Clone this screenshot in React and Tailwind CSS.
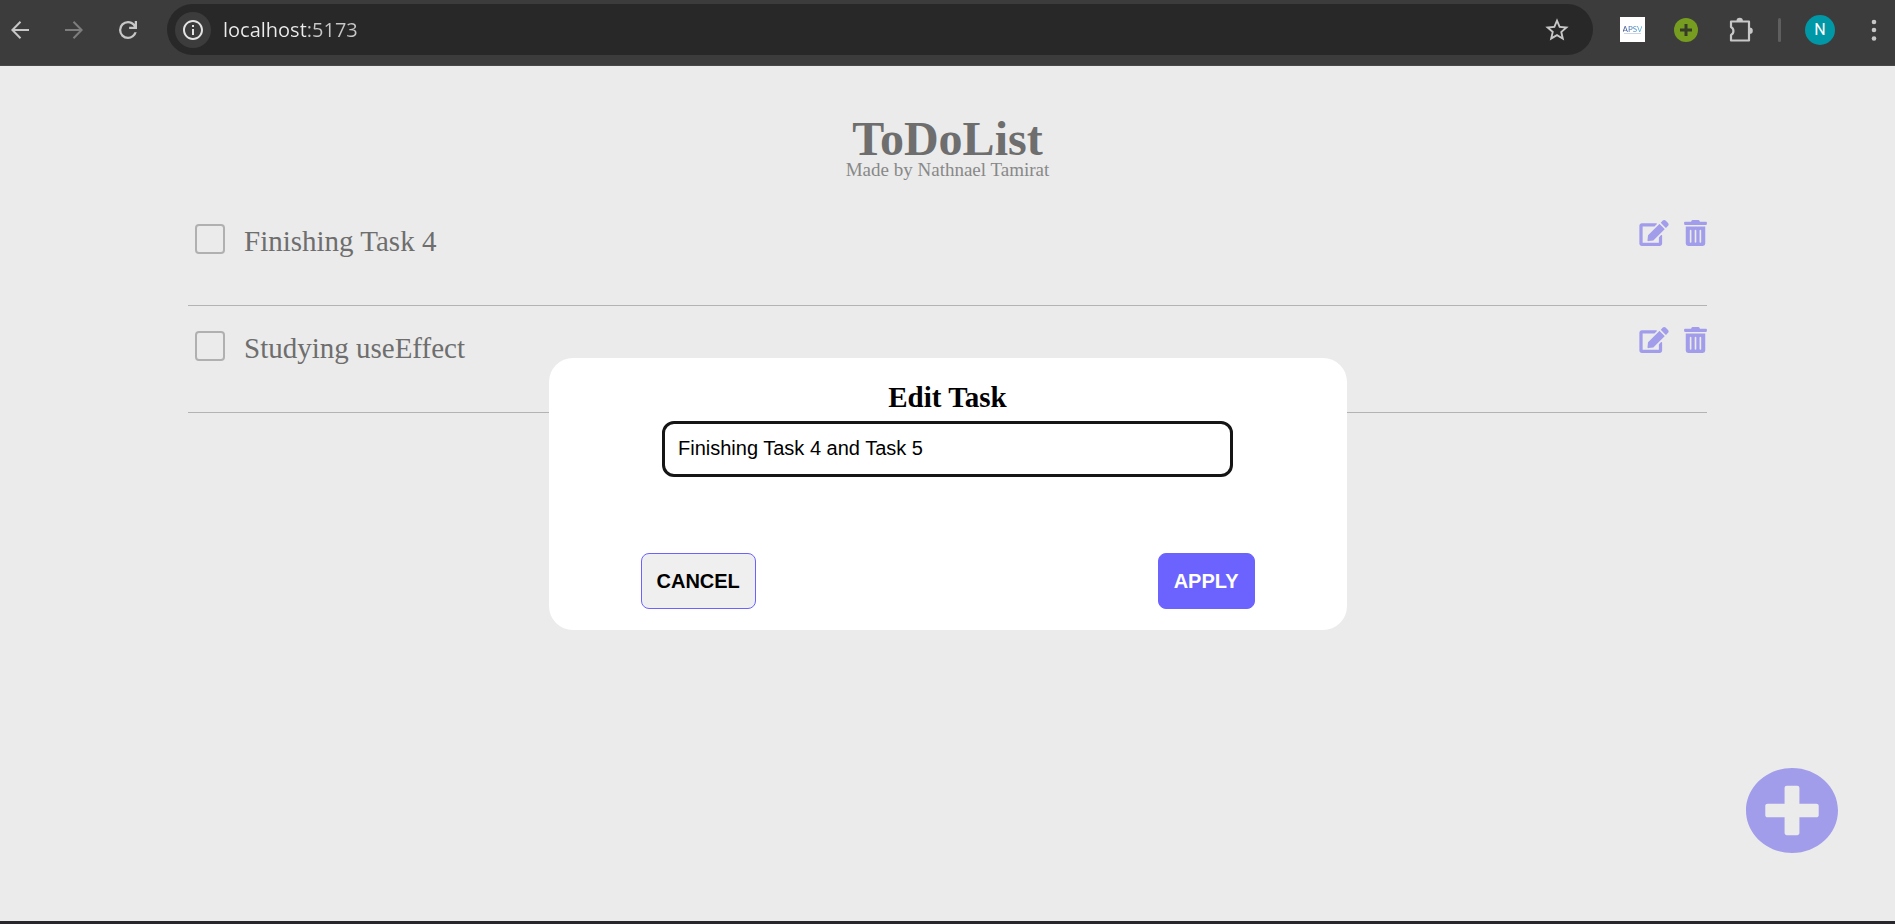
import { FaEdit, FaTrashAlt } from "react-icons/fa";
import { MdInfoOutline, MdStarBorder } from "react-icons/md";

const tasks = ["Finishing Task 4", "Studying useEffect"];

function BackArrow({ className }) {
  return (
    <svg viewBox="0 0 18 18" className={className} fill="none" stroke="currentColor" strokeWidth="2" aria-hidden="true">
      <path d="M18 9H1.5M9.5 0.8 1.4 9l8.1 8.2" />
    </svg>
  );
}

function Reload() {
  return (
    <svg viewBox="4 4 16 16" className="size-[18px]" fill="currentColor" aria-hidden="true">
      <path d="M12 20q-3.35 0-5.675-2.325T4 12t2.325-5.675T12 4q1.725 0 3.3.713T18 6.75V4h2v7h-7V9h4.2q-.8-1.4-2.187-2.2T12 6Q9.5 6 7.75 7.75T6 12t1.750 4.250T12 18q1.925 0 3.475-1.100T17.650 14h2.100q-.700 2.650-2.850 4.325T12 20" />
    </svg>
  );
}

function Puzzle() {
  return (
    <svg viewBox="0 0 26 26" className="size-[26px]" aria-hidden="true">
      <path d="M3 4.500h18v19H3v-5.500a4.500 4.500 0 0 0 0-8z" fill="none" stroke="currentColor" strokeWidth="2.200" strokeLinejoin="round" />
      <path d="M8.500 4a3.200 3.200 0 0 1 6.400 0zM21.500 10.500a3.300 3.300 0 0 1 0 6.600z" fill="currentColor" />
    </svg>
  );
}

function Toolbar() {
  return (
    <header className="flex h-[66px] items-start border-b border-[#484848] bg-[#3c3c3c] pt-1 text-[#c7c7c7]">
      <div className="flex h-[51px] w-[167px] shrink-0 items-center gap-9 pl-[11px]">
        <button type="button" aria-label="Back"><BackArrow className="size-[18px]" /></button>
        <button type="button" aria-label="Forward" className="text-[#7d7d7d]"><BackArrow className="size-[18px] rotate-180" /></button>
        <button type="button" aria-label="Reload"><Reload /></button>
      </div>
      <div className="flex h-[51px] flex-1 items-center rounded-full bg-[#282828] px-2">
        <button type="button" aria-label="Site information" className="flex size-9 items-center justify-center rounded-full bg-[#3c3c3c] text-[#e3e3e3]">
          <MdInfoOutline className="size-6" />
        </button>
        <input
          aria-label="Address"
          defaultValue="localhost:5173"
          className="ml-3 flex-1 bg-linear-to-r from-[#ececec] from-[83px] to-[#c7c7c7] to-[83px] bg-clip-text font-['Open_Sans',sans-serif] text-xl text-transparent outline-none"
        />
        <button type="button" aria-label="Bookmark" className="mr-[14px]"><MdStarBorder className="size-7" /></button>
      </div>
      <div className="flex h-[51px] shrink-0 items-center pr-[18px] pl-[27px]">
        <button type="button" className="flex size-[25px] flex-col items-center justify-center bg-white font-['Lato',sans-serif] text-[8px] leading-[8px] text-[#3f6fb5]">
          <span className="bg-linear-to-r from-[#3b4a8c] to-[#4fb3e0] bg-clip-text text-transparent">APSV</span>
          <span className="h-px w-[17px] bg-[#c9d6ea]" />
        </button>
        <button type="button" aria-label="Add" className="ml-[29px] flex size-6 items-center justify-center rounded-full bg-[#769c20] text-[#363c28]">
          <svg viewBox="0 0 12 12" className="size-3" aria-hidden="true"><path d="M6 0v12M0 6h12" stroke="currentColor" strokeWidth="3" /></svg>
        </button>
        <button type="button" aria-label="Extensions" className="ml-[30px]"><Puzzle /></button>
        <span className="ml-6 h-6 w-[3px] rounded-full bg-[#5f5f5f]" />
        <button type="button" className="ml-6 flex size-[30px] items-center justify-center rounded-full bg-[#0097a7] font-['Roboto',sans-serif] text-base text-white">N</button>
        <button type="button" aria-label="Menu" className="ml-9">
          <svg viewBox="0 0 6 22" className="h-[22px] w-[6px]" fill="currentColor" aria-hidden="true"><circle cx="3" cy="3" r="2.300" /><circle cx="3" cy="11" r="2.300" /><circle cx="3" cy="19.500" r="2.300" /></svg>
        </button>
      </div>
    </header>
  );
}

function Task({ name, index }) {
  const id = `task-${index}`;
  return (
    <li className="flex h-[107px] items-start border-b border-[#b3b3b3] pl-[7px]">
      <input id={id} type="checkbox" className="mt-[25px] size-[30px] appearance-none rounded-[4px] border-2 border-[#b0b0b0]" />
      <label htmlFor={id} className="mt-[26px] ml-[19px] flex-1 text-[29px] leading-8 text-[#6e6e6e]">{name}</label>
      <div className="mt-[21px] flex gap-[15px] text-[#a29deb]">
        <button type="button" aria-label={`Edit ${name}`}><FaEdit className="h-[26px] w-[30px]" /></button>
        <button type="button" aria-label={`Delete ${name}`}><FaTrashAlt className="h-[26px] w-[23px]" /></button>
      </div>
    </li>
  );
}

function EditDialog() {
  return (
    <div className="absolute inset-0 flex items-center justify-center">
      <form role="dialog" aria-labelledby="edit-title" className="flex w-[798px] max-w-full flex-col items-center rounded-3xl bg-white px-[92px] pt-[23px] pb-[21px]">
        <label id="edit-title" htmlFor="edit-task" className="text-[29px] leading-8 font-bold text-black">Edit Task</label>
        <input
          id="edit-task"
          defaultValue="Finishing Task 4 and Task 5"
          className="mt-2 h-14 w-[571px] max-w-full rounded-xl border-3 border-[#151515] px-[13px] font-['Liberation_Sans',sans-serif] text-xl text-black outline-none"
        />
        <div className="mt-19 flex w-full justify-between font-['Liberation_Sans',sans-serif] text-xl font-bold">
          <button type="button" className="h-14 rounded-lg border border-[#6c63ff] bg-[#efefef] px-[15px] text-black">CANCEL</button>
          <button type="submit" className="h-14 rounded-lg border border-[#6c63ff] bg-[#6c63ff] px-[15px] text-white">APPLY</button>
        </div>
      </form>
    </div>
  );
}

export default function App() {
  return (
    <div className="flex min-h-screen flex-col bg-[#ebebeb] font-['Liberation_Serif',serif]">
      <Toolbar />
      <main className="relative flex-1 border-b-3 border-[#28282c] px-47 pt-13">
        <div className="text-center">
          <h1 className="text-5xl leading-[42px] font-bold text-[#6e6e6e]">ToDoList</h1>
          <p className="text-[19px] leading-5 text-[#888888]">Made by Nathnael Tamirat</p>
        </div>
        <ul className="mt-[19px]">
          {tasks.map((name, i) => <Task key={name} name={name} index={i} />)}
        </ul>
        <button type="button" aria-label="Add task" className="absolute right-[57px] bottom-[68px] text-[#a29deb]">
          <svg viewBox="8 8 496 496" preserveAspectRatio="none" className="h-[85px] w-[92px]" fill="currentColor" aria-hidden="true">
            <path d="M256 8C119 8 8 119 8 256s111 248 248 248 248-111 248-248S393 8 256 8zm144 276c0 6.600-5.400 12-12 12h-92v92c0 6.600-5.400 12-12 12h-56c-6.600 0-12-5.400-12-12v-92h-92c-6.600 0-12-5.400-12-12v-56c0-6.600 5.400-12 12-12h92v-92c0-6.600 5.400-12 12-12h56c6.600 0 12 5.400 12 12v92h92c6.600 0 12 5.400 12 12v56z" />
          </svg>
        </button>
        <EditDialog />
      </main>
    </div>
  );
}
